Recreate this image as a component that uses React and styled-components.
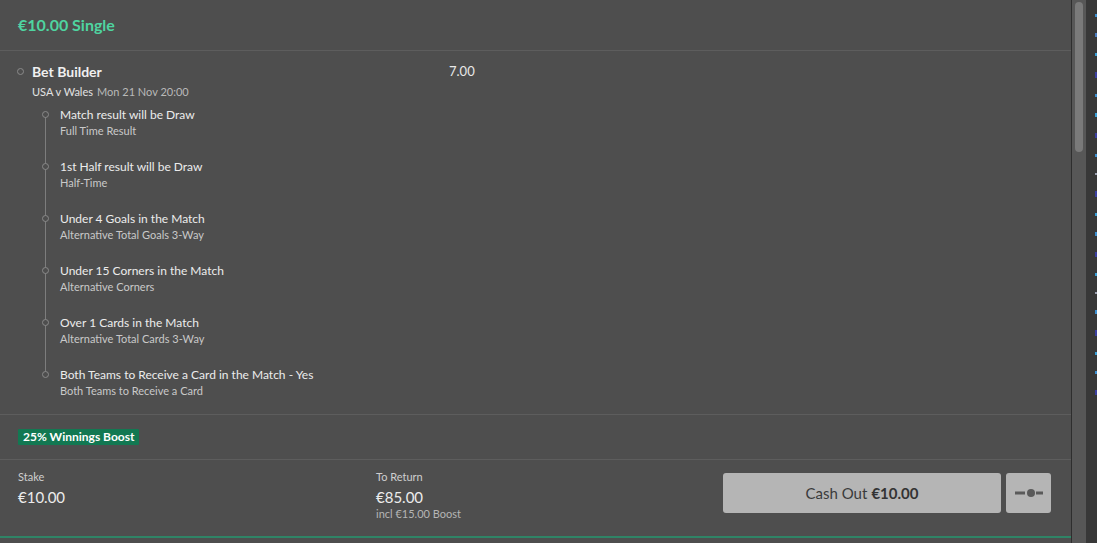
import React from 'react';
import styled, { createGlobalStyle } from 'styled-components';

const GlobalStyle = createGlobalStyle`
  html, body {
    margin: 0;
    padding: 0;
    background: #3a3a3a;
  }
  body {
    font-family: Lato, "Liberation Sans", Arial, sans-serif;
    -webkit-font-smoothing: antialiased;
  }
`

const Frame = styled.div`
  display: flex;
  flex-direction: row;
  width: 1097px;
  height: 543px;
  overflow: hidden;
`

const Panel = styled.div`
  width: 1071px;
  flex: none;
  background: #4e4e4e;
  border-right: 1px solid #2e2e2e;
  display: flex;
  flex-direction: column;
`

const Scrollbar = styled.div`
  width: 14px;
  flex: none;
  background: #575757;
  padding: 2px 3px;
  box-sizing: border-box;
`

const Thumb = styled.div`
  width: 8px;
  height: 150px;
  border-radius: 4px;
  background: #7a7a7a;
`

const Backdrop = styled.div`
  flex: 1;
  background: #383838;
  display: flex;
  flex-direction: column;
  align-items: flex-end;
  padding-top: 14px;
  gap: 16px;
`

const Speck = styled.span`
  display: block;
  width: 2px;
  height: ${(p) => p.$h || 3}px;
  background: ${(p) => p.$c || '#3d8fd0'};
`

const Header = styled.div`
  height: 51px;
  display: flex;
  align-items: center;
  padding-left: 18px;
  padding-bottom: 2px;
  box-sizing: border-box;
  border-bottom: 1px solid #5d5d5d;
`

const Title = styled.h1`
  margin: 0;
  font-size: 16px;
  font-weight: 700;
  color: #4fd4a0;
`

const Selection = styled.section`
  padding: 11px 0 16px 17px;
  border-bottom: 1px solid #5d5d5d;
`

const BuilderRow = styled.div`
  display: flex;
  align-items: center;
  height: 18px;
`

const Dot = styled.span`
  width: 5px;
  height: 5px;
  border: 1px solid #8a8a8a;
  border-radius: 50%;
  flex: none;
  box-sizing: content-box;
`

const BuilderName = styled.span`
  margin-left: 8px;
  width: 417px;
  font-size: 14px;
  font-weight: 700;
  color: #f0f0f0;
`

const Odds = styled.span`
  font-size: 13px;
  color: #e8e8e8;
`

const EventLine = styled.div`
  margin: 5px 0 0 15px;
  font-size: 11px;
  line-height: 14px;
  color: #e2e2e2;
  span {
    color: #b9b9b9;
    margin-left: 4px;
  }
`

const Legs = styled.ul`
  list-style: none;
  margin: 9px 0 0 24px;
  padding: 0;
  display: flex;
  flex-direction: column;
  gap: 22px;
`

const Leg = styled.li`
  display: flex;
  flex-direction: row;
`

const Rail = styled.div`
  position: relative;
  width: 9px;
  flex: none;
  margin-right: 10px;
  &::before {
    content: '';
    display: ${(p) => (p.$last ? 'none' : 'block')};
    position: absolute;
    left: 4px;
    top: 7px;
    width: 1px;
    height: 52px;
    background: #7d7d7d;
  }
`

const LegDot = styled.span`
  position: relative;
  display: block;
  margin: 3px 0 0 1px;
  width: 5px;
  height: 5px;
  border: 1px solid #8a8a8a;
  border-radius: 50%;
  background: #4e4e4e;
  z-index: 1;
`

const LegText = styled.div`
  display: flex;
  flex-direction: column;
`

const LegTitle = styled.span`
  font-size: 12px;
  line-height: 14px;
  color: #ececec;
`

const LegMarket = styled.span`
  margin-top: 2px;
  font-size: 11px;
  line-height: 14px;
  color: #c9c9c9;
`

const BoostRow = styled.div`
  padding: 14px 18px;
  border-bottom: 1px solid #5d5d5d;
  display: flex;
`

const Badge = styled.span`
  background: #127852;
  color: #fff;
  font-size: 12px;
  font-weight: 700;
  line-height: 16px;
  padding: 0 5px;
  border-radius: 1px;
`

const Footer = styled.div`
  height: 78px;
  display: flex;
  flex-direction: row;
  padding: 10px 20px 0 18px;
  box-sizing: border-box;
  border-bottom: 2px solid #2f8466;
`

const Figure = styled.div`
  display: flex;
  flex-direction: column;
  width: ${(p) => p.$w}px;
  flex: none;
`

const Label = styled.span`
  font-size: 11px;
  line-height: 14px;
  color: #cfcfcf;
`

const Amount = styled.span`
  margin-top: 3px;
  font-size: 15px;
  line-height: 20px;
  color: #ececec;
`

const Note = styled.span`
  font-size: 11px;
  line-height: 14px;
  color: #b5b5b5;
`

const Actions = styled.div`
  margin-left: auto;
  margin-top: 3px;
  display: flex;
  gap: 5px;
`

const CashOut = styled.button`
  width: 278px;
  height: 40px;
  border: none;
  border-radius: 3px;
  background: #b5b5b5;
  color: #3b3b3b;
  font-family: inherit;
  font-size: 15px;
  cursor: pointer;
  b {
    font-weight: 700;
    margin-left: 4px;
    color: #333;
  }
`

const SliderButton = styled.button`
  width: 45px;
  height: 40px;
  border: none;
  border-radius: 3px;
  background: #b5b5b5;
  display: flex;
  align-items: center;
  justify-content: center;
  padding: 0;
  cursor: pointer;
`

const legs = [
  ['Match result will be Draw', 'Full Time Result'],
  ['1st Half result will be Draw', 'Half-Time'],
  ['Under 4 Goals in the Match', 'Alternative Total Goals 3-Way'],
  ['Under 15 Corners in the Match', 'Alternative Corners'],
  ['Over 1 Cards in the Match', 'Alternative Total Cards 3-Way'],
  ['Both Teams to Receive a Card in the Match - Yes', 'Both Teams to Receive a Card'],
];

const specks = [
  ['#3d8fd0', 3], ['#4a7cc0', 4], ['#3aa0d8', 3], ['#3b3fa0', 6], ['#3d8fd0', 3],
  ['#3aa0d8', 4], ['#3b3fa0', 5], ['#3d8fd0', 3], ['#9aa0b0', 2], ['#3b3fa0', 6],
  ['#3aa0d8', 3], ['#3d8fd0', 4], ['#3b3fa0', 5], ['#3aa0d8', 3], ['#9aa0b0', 2],
  ['#3d8fd0', 4], ['#3b3fa0', 6], ['#3aa0d8', 3], ['#3d8fd0', 3], ['#3b3fa0', 5],
];

export default function App() {
  return (
    <>
      <GlobalStyle />
      <Frame>
        <Panel>
          <Header>
            <Title>€10.00 Single</Title>
          </Header>
          <Selection>
            <BuilderRow>
              <Dot />
              <BuilderName>Bet Builder</BuilderName>
              <Odds>7.00</Odds>
            </BuilderRow>
            <EventLine>
              USA v Wales<span>Mon 21 Nov 20:00</span>
            </EventLine>
            <Legs>
              {legs.map(([title, market], i) => (
                <Leg key={title}>
                  <Rail $last={i === legs.length - 1}>
                    <LegDot />
                  </Rail>
                  <LegText>
                    <LegTitle>{title}</LegTitle>
                    <LegMarket>{market}</LegMarket>
                  </LegText>
                </Leg>
              ))}
            </Legs>
          </Selection>
          <BoostRow>
            <Badge>25% Winnings Boost</Badge>
          </BoostRow>
          <Footer>
            <Figure $w={358}>
              <Label>Stake</Label>
              <Amount>€10.00</Amount>
            </Figure>
            <Figure $w={200}>
              <Label>To Return</Label>
              <Amount>€85.00</Amount>
              <Note>incl €15.00 Boost</Note>
            </Figure>
            <Actions>
              <CashOut>
                Cash Out<b>€10.00</b>
              </CashOut>
              <SliderButton aria-label="Partial cash out">
                <svg width="28" height="10" viewBox="0 0 28 10">
                  <rect x="0" y="3.5" width="10" height="3" fill="#5a5a5a" />
                  <circle cx="16" cy="5" r="4" fill="#5a5a5a" />
                  <rect x="21" y="3.5" width="7" height="3" fill="#5a5a5a" />
                </svg>
              </SliderButton>
            </Actions>
          </Footer>
        </Panel>
        <Scrollbar>
          <Thumb />
        </Scrollbar>
        <Backdrop>
          {specks.map(([c, h], i) => (
            <Speck key={i} $c={c} $h={h} />
          ))}
        </Backdrop>
      </Frame>
    </>
  );
}
